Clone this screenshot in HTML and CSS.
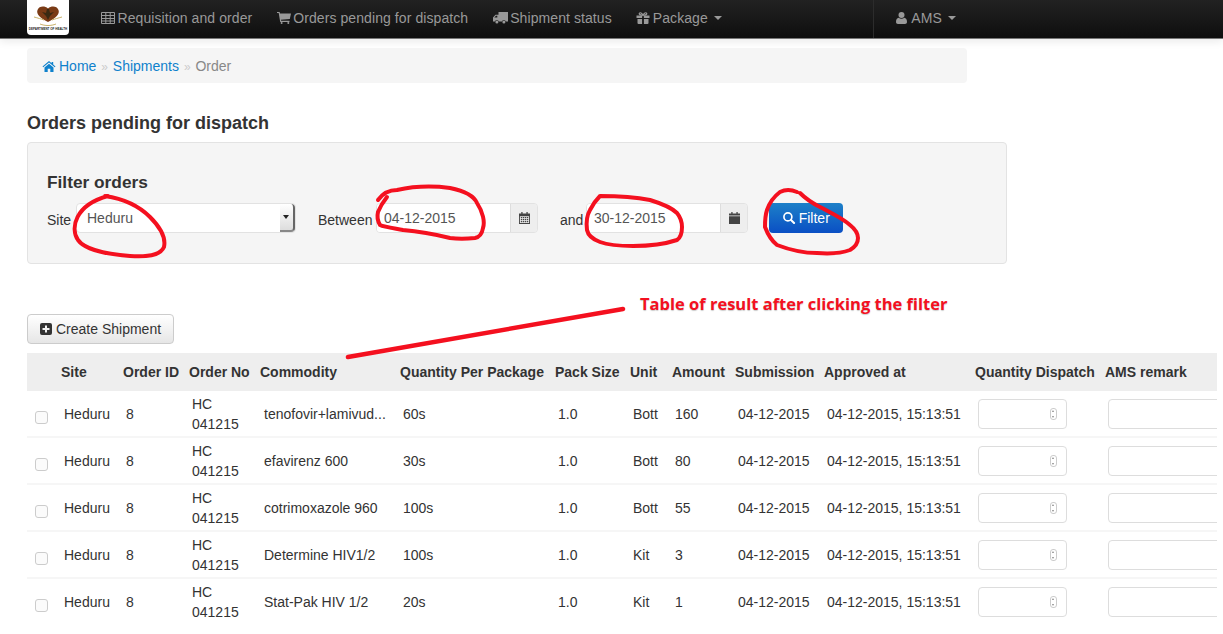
FILE: index.html
```html
<!DOCTYPE html>
<html>
<head>
    <title>Orders pending for dispatch</title>
    <link rel="stylesheet" href="styles.css">
</head>
<body>
    <svg class="icon-defs" width="0" height="0">
        <symbol id="i-table" viewBox="0 0 14 12"><path fill="none" stroke="currentColor" d="M.5.5h13v11H.5zM.5 3.500h13M.5 6.500h13M.5 9h13M4.800.5v11M9.200.5v11"/></symbol>
        <symbol id="i-cart" viewBox="0 0 14 12"><path fill="currentColor" d="M0 0h2.600l.4 1.400h11L12.800 7 3.900 7.800l.3 1H12.500v1.100H3.200L1.700 1.100H0z"/><circle fill="currentColor" cx="4.600" cy="11" r="1"/><circle fill="currentColor" cx="11.300" cy="11" r="1"/></symbol>
        <symbol id="i-truck" viewBox="0 0 15 12"><path fill="currentColor" d="M5.500 0H15v9.500h-2.200a2 2 0 0 0-3.900 0H5.800a2 2 0 0 0-3.900 0H0V5.500L2.500 2.800h3zM1.300 5.600h3V3.800H3z"/><circle fill="currentColor" cx="3.900" cy="10" r="1.500"/><circle fill="currentColor" cx="10.900" cy="10" r="1.500"/></symbol>
        <symbol id="i-gift" viewBox="0 0 13 12"><path fill="currentColor" d="M0 3.500h5.600V6H0zM7.400 3.500H13V6H7.400zM1 6.900h4.600V12H2a1 1 0 0 1-1-1zM7.400 6.900H12V11a1 1 0 0 1-1 1H7.400z"/><path fill="none" stroke="currentColor" stroke-width="1.200" d="M6.500 3.200C5.500 1 3.500.2 2.900 1.200c-.6 1.100.8 2 3.600 2 2.800 0 4.200-.9 3.600-2C9.500.2 7.500 1 6.500 3.200z"/></symbol>
        <symbol id="i-user" viewBox="0 0 11 12"><circle fill="currentColor" cx="5.500" cy="3" r="3"/><path fill="currentColor" d="M2.700 5.800c1.500 1.200 4.100 1.200 5.600 0C10 6 11 7.600 11 10c0 1.300-.8 2-2 2H2c-1.200 0-2-.7-2-2 0-2.400 1-4 2.700-4.200z"/></symbol>
        <symbol id="i-home" viewBox="0 0 13 11"><path fill="currentColor" d="M6.500 0l2.600 2.200V1h1.600v2.600L13 5.500l-.7.800L6.500 1.500.7 6.300 0 5.500zM6.500 2.800l4.500 3.700V11H7.800V7.700H5.200V11H2V6.500z"/></symbol>
        <symbol id="i-cal" viewBox="0 0 12 13"><path fill="currentColor" d="M2.500 0h1.400v1.500h4.200V0h1.400v1.500H12V13H0V1.500h2.500zM1 4.500v7.500h10V4.500z"/><path fill="currentColor" d="M2 5.500h1.500v1.400H2zM4.200 5.500h1.500v1.400H4.200zM6.400 5.500h1.500v1.400H6.400zM8.600 5.500h1.500v1.400H8.600zM2 7.600h1.500V9H2zM4.200 7.600h1.500V9H4.200zM6.400 7.600h1.500V9H6.400zM8.600 7.600h1.500V9H8.600zM2 9.700h1.500v1.400H2zM4.200 9.700h1.500v1.400H4.200zM6.400 9.700h1.500v1.400H6.400zM8.600 9.700h1.500v1.400H8.600z"/></symbol>
        <symbol id="i-cal-solid" viewBox="0 0 12 13"><path fill="currentColor" d="M2.500 0h1.400v1.500h4.200V0h1.400v1.500H12v2.200H0V1.500h2.500zM0 4.500h12V13H0z"/></symbol>
        <symbol id="i-search" viewBox="0 0 13 13"><circle fill="none" stroke="currentColor" stroke-width="1.800" cx="5.300" cy="5.300" r="4.300"/><path fill="none" stroke="currentColor" stroke-width="2.200" stroke-linecap="round" d="M8.700 8.700L12 12"/></symbol>
        <symbol id="i-plus" viewBox="0 0 12 12"><path fill="currentColor" fill-rule="evenodd" d="M2 0h8a2 2 0 0 1 2 2v8a2 2 0 0 1-2 2H2a2 2 0 0 1-2-2V2a2 2 0 0 1 2-2zM5 2.500v2.500H2.500v2H5v2.500h2V7h2.500V5H7V2.500z"/></symbol>
    </svg>

    <div class="navbar">
        <div class="logo">
            <svg class="logo-mark" viewBox="0 0 30 22">
                <path fill="#7a3b16" d="M15 17C7 13 3 9 4.500 5 6 1 11.500.5 15 3.500 18.500.5 24 1 25.500 5 27 9 23 13 15 17z"/>
                <path fill="#3a2a12" d="M14 4h2l1 4 4-1-4 4-2 4-2-4-4-4 4 1z"/>
                <path fill="none" stroke="#c9b26a" d="M1 12c4 1 7 2 10 3M29 12c-4 1-7 2-10 3M7 19c5 2 11 2 16 0"/>
            </svg>
            <span class="logo-text">DEPARTMENT OF HEALTH</span>
        </div>
        <a class="nav-link"><svg class="icon"><use href="#i-table"/></svg>Requisition and order</a>
        <a class="nav-link"><svg class="icon"><use href="#i-cart"/></svg>Orders pending for dispatch</a>
        <a class="nav-link"><svg class="icon icon-wide"><use href="#i-truck"/></svg>Shipment status</a>
        <a class="nav-link"><svg class="icon"><use href="#i-gift"/></svg>Package<span class="caret"></span></a>
        <div class="nav-right">
            <a class="nav-link"><svg class="icon icon-user"><use href="#i-user"/></svg>AMS<span class="caret"></span></a>
        </div>
    </div>

    <div class="content">
        <div class="breadcrumb">
            <a href="#"><svg class="icon icon-home"><use href="#i-home"/></svg>Home</a>
            <span class="sep">»</span>
            <a href="#">Shipments</a>
            <span class="sep">»</span>
            <span class="current">Order</span>
        </div>

        <h3 class="page-title">Orders pending for dispatch</h3>

        <div class="well">
            <h4>Filter orders</h4>
            <form class="filter-form">
                <label class="label-site">Site</label>
                <div class="select-box">
                    <select><option>Heduru</option></select>
                    <span class="select-arrow"></span>
                </div>
                <label class="label-between">Between</label>
                <div class="date-group">
                    <input type="text" value="04-12-2015">
                    <span class="addon"><svg class="icon-cal"><use href="#i-cal"/></svg></span>
                </div>
                <label class="label-and">and</label>
                <div class="date-group">
                    <input type="text" value="30-12-2015">
                    <span class="addon"><svg class="icon-cal"><use href="#i-cal-solid"/></svg></span>
                </div>
                <button type="button" class="btn-filter"><svg class="icon"><use href="#i-search"/></svg>Filter</button>
            </form>
        </div>

        <button type="button" class="btn-create"><svg class="icon"><use href="#i-plus"/></svg>Create Shipment</button>

        <table class="orders">
            <colgroup>
                <col class="c-check"><col class="c-site"><col class="c-id"><col class="c-no"><col class="c-commodity">
                <col class="c-qty"><col class="c-pack"><col class="c-unit"><col class="c-amount"><col class="c-sub">
                <col class="c-approved"><col class="c-dispatch"><col class="c-remark">
            </colgroup>
            <thead>
                <tr>
                    <th></th><th>Site</th><th>Order ID</th><th>Order No</th><th>Commodity</th>
                    <th>Quantity Per Package</th><th>Pack Size</th><th>Unit</th><th>Amount</th><th>Submission</th>
                    <th>Approved at</th><th>Quantity Dispatch</th><th>AMS remark</th>
                </tr>
            </thead>
            <tbody>
                <tr>
                    <td class="cell-check"><input type="checkbox"></td><td>Heduru</td><td>8</td><td>HC 041215</td><td>tenofovir+lamivud...</td>
                    <td>60s</td><td>1.0</td><td>Bott</td><td>160</td><td>04-12-2015</td><td>04-12-2015, 15:13:51</td>
                    <td><div class="qty"><input type="text"><span class="spin"></span></div></td><td><input class="remark" type="text"></td>
                </tr>
                <tr>
                    <td class="cell-check"><input type="checkbox"></td><td>Heduru</td><td>8</td><td>HC 041215</td><td>efavirenz 600</td>
                    <td>30s</td><td>1.0</td><td>Bott</td><td>80</td><td>04-12-2015</td><td>04-12-2015, 15:13:51</td>
                    <td><div class="qty"><input type="text"><span class="spin"></span></div></td><td><input class="remark" type="text"></td>
                </tr>
                <tr>
                    <td class="cell-check"><input type="checkbox"></td><td>Heduru</td><td>8</td><td>HC 041215</td><td>cotrimoxazole 960</td>
                    <td>100s</td><td>1.0</td><td>Bott</td><td>55</td><td>04-12-2015</td><td>04-12-2015, 15:13:51</td>
                    <td><div class="qty"><input type="text"><span class="spin"></span></div></td><td><input class="remark" type="text"></td>
                </tr>
                <tr>
                    <td class="cell-check"><input type="checkbox"></td><td>Heduru</td><td>8</td><td>HC 041215</td><td>Determine HIV1/2</td>
                    <td>100s</td><td>1.0</td><td>Kit</td><td>3</td><td>04-12-2015</td><td>04-12-2015, 15:13:51</td>
                    <td><div class="qty"><input type="text"><span class="spin"></span></div></td><td><input class="remark" type="text"></td>
                </tr>
                <tr class="last-row">
                    <td class="cell-check"><input type="checkbox"></td><td>Heduru</td><td>8</td><td>HC 041215</td><td>Stat-Pak HIV 1/2</td>
                    <td>20s</td><td>1.0</td><td>Kit</td><td>1</td><td>04-12-2015</td><td>04-12-2015, 15:13:51</td>
                    <td><div class="qty"><input type="text"><span class="spin"></span></div></td><td><input class="remark" type="text"></td>
                </tr>
            </tbody>
        </table>
    </div>

    <!-- red marks drawn over the screenshot -->
    <svg class="marks" viewBox="0 0 1223 634">
        <path d="M105 196 C125 199 140 207 150 217 C160 227 166 238 164 247 C160 256 146 257 130 256 C105 254 85 250 78 240 C70 228 75 205 108 196"/>
        <path d="M378 200 C383 193 390 190 397 190 C415 186 435 186 450 188 C465 191 474 196 477 203 C483 212 485 222 483 228 C482 234 480 237 475 238 C465 239 458 239 450 238 C430 233 415 231 403 230 C392 228 384 227 380 225 C377 220 377 216 378 212 C380 207 383 202 387 197"/>
        <path d="M600 196 C618 196 635 197 650 200 C663 204 672 208 677 213 C681 218 682 222 682 227 C682 233 680 238 677 240 C662 245 648 246 633 246 C620 246 608 245 600 242 C592 239 588 235 587 230 C586 222 587 215 590 210 C593 204 596 200 600 196"/>
        <path d="M797 192 C790 189 784 190 780 192 C772 198 769 204 767 210 C765 216 765 222 765 227 C768 235 772 241 777 245 C790 250 803 253 817 253 C830 254 842 253 850 250 C855 247 858 243 858 238 C858 233 855 229 850 225 C842 218 831 213 820 207 C812 203 805 198 800 193"/>
        <path class="mark-line" d="M348 357 L623 309"/>
    </svg>
    <div class="mark-text">Table of result after clicking the filter</div>
</body>
</html>
```

FILE: styles.css
```css
html, body {
    margin: 0;
    height: 634px;
    overflow: hidden;
}
body {
    position: relative;
    font-family: "Liberation Sans", Arial, sans-serif;
    font-size: 14px;
    line-height: 20px;
    color: #333;
    background-color: #fff;
}
a {
    color: #0f81cc;
    text-decoration: none;
}
.icon-defs {
    position: absolute;
}

/* top bar */
.navbar {
    display: flex;
    align-items: center;
    box-sizing: border-box;
    height: 39px;
    padding: 0 0 2px 27px;
    background: linear-gradient(#222222, #0e0e0e);
    border-bottom: 1px solid #777;
    box-shadow: 0 3px 8px rgba(0, 0, 0, 0.08);
}
.logo {
    display: flex;
    flex-direction: column;
    align-items: center;
    align-self: flex-start;
    width: 42px;
    height: 35px;
    margin-right: 19.750px;
    background-color: #fff;
    border-radius: 0 0 4px 4px;
}
.logo-mark {
    width: 30px;
    height: 22px;
    margin-top: 5px;
}
.logo-text {
    font-size: 3px;
    line-height: 4px;
    font-weight: bold;
    white-space: nowrap;
    color: #222;
}
.nav-link {
    display: flex;
    align-items: center;
    margin: 0 12.250px;
    color: #999;
    letter-spacing: 0.080px;
    white-space: nowrap;
}
.icon {
    width: 14px;
    height: 12px;
    margin-right: 2.500px;
}
.icon-wide {
    width: 15px;
}
.icon-user {
    width: 11px;
    margin-right: 4px;
}
.caret {
    width: 0;
    height: 0;
    margin-left: 6px;
    border-top: 4px solid #999;
    border-left: 4px solid transparent;
    border-right: 4px solid transparent;
}
.nav-right {
    margin-left: auto;
    margin-bottom: -2px;
    padding-bottom: 2px;
    width: 339px;
    align-self: stretch;
    display: flex;
    align-items: center;
    padding-left: 10px;
    border-left: 1px solid #2c2c2c;
}

/* page body */
.content {
    width: 1190px;
    margin-left: 27px;
    overflow: hidden;
}
.breadcrumb {
    width: 910px;
    height: 35px;
    margin-top: 9px;
    padding: 0 15px;
    line-height: 36px;
    background-color: #f5f5f5;
    border-radius: 4px;
}
.icon-home {
    width: 14px;
    height: 11px;
    vertical-align: -1px;
    margin-right: 3px;
}
.sep {
    margin: 0 1px;
    color: #ccc;
    font-size: 12px;
}
.current {
    color: #888;
}
.page-title {
    margin: 29px 0 8px;
    font-size: 18px;
    line-height: 22px;
    font-weight: bold;
}
.well {
    box-sizing: border-box;
    width: 980px;
    height: 122px;
    padding: 28px 19px 0;
    background-color: #f5f5f5;
    border: 1px solid #e3e3e3;
    border-radius: 4px;
}
.well h4 {
    margin: 0;
    font-size: 17.300px;
    line-height: 22px;
}
.filter-form {
    display: flex;
    align-items: center;
    margin-top: 10px;
}
.filter-form label {
    position: relative;
    top: 2px;
}
.label-site {
    width: 29px;
}
.label-between {
    width: 58px;
    margin-left: 22px;
}
.label-and {
    width: 26px;
    margin-left: 22px;
}
.select-box {
    display: flex;
    box-sizing: border-box;
    width: 220px;
    height: 30px;
    margin-top: -1px;
    background-color: #fff;
    border: 1px solid #e2e2e2;
    border-radius: 4px;
}
.select-box select {
    flex: 1;
    appearance: none;
    border: 0;
    outline: 0;
    padding-left: 10px;
    font-family: inherit;
    font-size: 14px;
    color: #555;
    background: transparent;
}
.select-arrow {
    position: relative;
    width: 13px;
    background: linear-gradient(#fff, #ddd);
    border-right: 2px solid #666;
    border-bottom: 2px solid #888;
    border-radius: 0 4px 4px 0;
}
.select-arrow::after {
    content: "";
    position: absolute;
    left: 3px;
    top: 11px;
    border-top: 4px solid #222;
    border-left: 3px solid transparent;
    border-right: 3px solid transparent;
}
.date-group {
    display: flex;
    box-sizing: border-box;
    width: 162px;
    height: 30px;
    border: 1px solid #e2e2e2;
    border-radius: 4px;
    overflow: hidden;
}
.date-group input {
    flex: 1;
    min-width: 0;
    border: 0;
    outline: 0;
    padding: 0 7px;
    font-family: inherit;
    font-size: 14px;
    color: #555;
    background-color: #fff;
}
.addon {
    display: flex;
    align-items: center;
    justify-content: center;
    width: 26px;
    background-color: #eee;
    border-left: 1px solid #ddd;
    color: #444;
}
.icon-cal {
    width: 11px;
    height: 12px;
}
.btn-filter {
    display: flex;
    align-items: center;
    justify-content: center;
    width: 74px;
    height: 30px;
    margin-left: 21px;
    padding: 0;
    border: 0;
    border-radius: 4px;
    font-family: inherit;
    font-size: 14px;
    color: #fff;
    background: linear-gradient(#1d80c8, #0a4fc4);
}
.btn-create {
    display: flex;
    align-items: center;
    box-sizing: border-box;
    width: 147px;
    height: 30px;
    margin-top: 50px;
    padding: 0 0 0 12px;
    border: 1px solid #ccc;
    border-radius: 4px;
    font-family: inherit;
    font-size: 14px;
    color: #333;
    background: linear-gradient(#fff, #e6e6e6);
}
.btn-create .icon {
    width: 12px;
    margin-right: 4px;
}

/* orders table */
.orders {
    width: 1190px;
    margin-top: 9px;
    table-layout: fixed;
    border-collapse: collapse;
}
.c-check { width: 29px; }
.c-site { width: 63px; }
.c-id { width: 66px; }
.c-no { width: 71px; }
.c-commodity { width: 140px; }
.c-qty { width: 155px; }
.c-pack { width: 75px; }
.c-unit { width: 42px; }
.c-amount { width: 63px; }
.c-sub { width: 89px; }
.c-approved { width: 151px; }
.c-dispatch { width: 130px; }
.c-remark { width: 116px; }
.orders th {
    height: 37px;
    padding: 0 0 1px 4px;
    text-align: left;
    font-weight: bold;
    white-space: nowrap;
    background-color: #eee;
}
.orders th:nth-child(2) {
    padding-left: 5px;
}
.orders td {
    height: 45px;
    padding: 0 0 0 7px;
    border-bottom: 2px solid #f6f6f6;
    white-space: nowrap;
}
.orders td:nth-child(2), .orders td:nth-child(5) {
    padding-left: 8px;
}
.orders td:nth-child(4) {
    white-space: normal;
}
.orders .last-row td {
    border-bottom: 0;
}
.orders .cell-check {
    padding-left: 8px;
}
.cell-check input {
    appearance: none;
    display: block;
    box-sizing: border-box;
    width: 13px;
    height: 13px;
    margin: 8px 0 0;
    background-color: #fbfbfb;
    border: 1px solid #ccc;
    border-radius: 3px;
}
.qty {
    position: relative;
}
.qty input, .remark {
    display: block;
    box-sizing: border-box;
    height: 30px;
    background-color: #fff;
    border: 1px solid #ddd;
    border-radius: 4px;
    outline: 0;
}
.qty input {
    width: 89px;
}
.remark {
    width: 120px;
}
.spin {
    position: absolute;
    left: 72px;
    top: 9px;
    box-sizing: border-box;
    width: 7px;
    height: 12px;
    border: 1px solid #ccc;
    border-radius: 3px;
    background-color: #fff;
}
.spin::before, .spin::after {
    content: "";
    position: absolute;
    left: 1px;
    border-left: 1.500px solid transparent;
    border-right: 1.500px solid transparent;
}
.spin::before {
    top: 1px;
    border-bottom: 2px solid #888;
}
.spin::after {
    bottom: 1px;
    border-top: 2px solid #888;
}

/* annotations */
.marks {
    position: absolute;
    left: 0;
    top: 0;
    width: 1223px;
    height: 634px;
    fill: none;
    stroke: #f4101f;
    stroke-width: 4;
    stroke-linecap: round;
    pointer-events: none;
}
.marks .mark-line {
    stroke-width: 4.500;
}
.mark-text {
    position: absolute;
    left: 640px;
    top: 293px;
    font-family: "Open Sans", sans-serif;
    font-size: 16.500px;
    line-height: 22px;
    font-weight: bold;
    white-space: nowrap;
    color: #f4101f;
    text-shadow: 0 1px 1px #ccc;
}
```
